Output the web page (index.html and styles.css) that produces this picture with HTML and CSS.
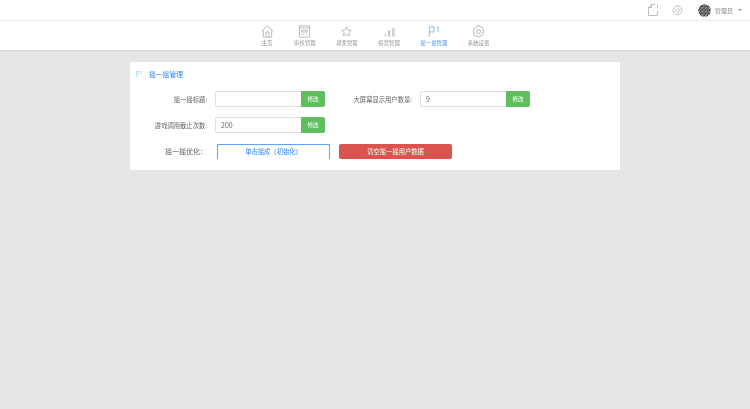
FILE: index.html
```html
<!DOCTYPE html>
<html lang="zh">
<head>
<meta charset="utf-8">
<title>摇一摇管理</title>
<link rel="stylesheet" href="styles.css">
</head>
<body>
<div class="page">
<header class="topbar">
  <svg class="top-icon doc" viewBox="0 0 10 12"><path d="M3.500.5H7.500M.5 3.500v8h9V7M3.500.5.500 3.500h3zM9.500 .5v3.500"/></svg>
  <svg class="top-icon gear" viewBox="0 0 14 14"><circle cx="7" cy="7" r="2.200"/><path d="M5.800.8h2.400l.4 1.800 1.700-.7 1.700 1.700-1 1.500 1.700.7v2.400l-1.700.5.900 1.600-1.700 1.700-1.600-.9-.5 1.700H5.800l-.5-1.700-1.600.9L2 10.300l.9-1.600-1.700-.5V5.800l1.700-.7-1-1.500 1.700-1.700 1.700.7z"/></svg>
  <svg class="avatar" viewBox="0 0 14 14"><defs><pattern id="noise" width="4" height="4" patternUnits="userSpaceOnUse"><rect width="4" height="4" fill="#2e2e2e"/><path d="M0 0h1.200v1.200H0zM2 1h1.500v1H2zM1 2.500h1v1.500H1zM3 3h1v1H3z" fill="#e0e0e0"/></pattern></defs><circle cx="7" cy="7" r="6.800" fill="url(#noise)"/></svg>
  <span class="username">管理员</span>
  <span class="caret"></span>
</header>
<nav class="nav">
  <a class="nav-item">
    <svg viewBox="0 0 14 14"><path d="M.8 6.500 7 1l6.200 5.500M2.500 5.500v7.500h9V5.500M5.500 13V7.500h3V13"/></svg>
    <span>主页</span>
  </a>
  <a class="nav-item">
    <svg viewBox="0 0 14 14"><path d="M1.500 1h11v12h-11zM1.500 3h11M4 5.500h6v2H4zM4 10h3M8.500 10H10"/></svg>
    <span>审核管理</span>
  </a>
  <a class="nav-item">
    <svg viewBox="0 0 14 14"><path d="m7 2 1.500 3.300 3.500.5-2.500 2.400.7 3.500L7 10l-3.200 1.700.7-3.500L2 5.800l3.500-.5z"/></svg>
    <span>摸奖管理</span>
  </a>
  <a class="nav-item">
    <svg viewBox="0 0 14 14"><path d="M2.500 12.500V9M6 12.500V6M7.300 12.500V6M10.500 12.500V3.500M11.800 12.500V3.500"/></svg>
    <span>投票管理</span>
  </a>
  <a class="nav-item active">
    <svg viewBox="0 0 14 14"><path d="M2.500 12.500V2H7.500V7.500H2.500M10.500 2h1.500V7.500"/></svg>
    <span>摇一摇管理</span>
  </a>
  <a class="nav-item">
    <svg viewBox="0 0 14 14"><circle cx="7" cy="7" r="2.200"/><path d="M5.800.8h2.400l.4 1.800 1.700-.7 1.700 1.700-1 1.500 1.700.7v2.400l-1.700.5.900 1.600-1.700 1.700-1.600-.9-.5 1.700H5.800l-.5-1.700-1.600.9L2 10.300l.9-1.600-1.700-.5V5.800l1.700-.7-1-1.500 1.700-1.700 1.700.7z"/></svg>
    <span>系统设置</span>
  </a>
</nav>
<main class="card">
  <h1 class="card-title">
    <svg viewBox="0 0 8 8"><path d="M.5 8V.5h3.500v3.500H.5M6 .5h1.500V4"/></svg>
    <span>摇一摇管理</span>
  </h1>
  <div class="form">
    <div class="field">
      <label class="label">摇一摇标题:</label>
      <div class="input-group"><input class="input" type="text" value=""><button class="btn-edit">修改</button></div>
    </div>
    <div class="field">
      <label class="label">大屏幕显示用户数量:</label>
      <div class="input-group"><input class="input" type="text" value="9"><button class="btn-edit">修改</button></div>
    </div>
    <div class="field">
      <label class="label">游戏调用截止次数:</label>
      <div class="input-group"><input class="input" type="text" value="200"><button class="btn-edit">修改</button></div>
    </div>
    <div class="field"></div>
    <div class="field actions">
      <label class="label label-wide">摇一摇优化：</label>
      <button class="btn-outline">单击摇成（初始化）</button>
      <button class="btn-danger">清空摇一摇用户数据</button>
    </div>
  </div>
</main>
</div>
</body>
</html>
```
FILE: styles.css
```css
* { box-sizing: border-box; }
html, body { margin: 0; height: 100%; }
body {
  background: #e6e6e6;
  font-family: "Noto Sans CJK SC", "Liberation Sans", sans-serif;
  color: #666;
  font-size: 6.300px;
  overflow: hidden;
}
.page { filter: blur(.25px); }
svg { fill: none; stroke: currentColor; stroke-width: .65; display: block; }

.topbar {
  height: 21px;
  background: #fff;
  border-bottom: 1px solid #ececec;
  display: flex;
  align-items: center;
  justify-content: flex-end;
  padding-right: 8px;
  color: #9c9c9c;
}
.top-icon.doc { width: 10px; height: 12px; margin-right: 14px; }
.top-icon.gear { width: 11px; height: 11px; margin-right: 15px; }
.avatar { width: 13px; height: 13px; stroke: none; margin-right: 4px; }
.username { font-size: 6px; color: #8a8a8a; margin-right: 5px; }
.caret {
  width: 0; height: 0;
  border-left: 2px solid transparent;
  border-right: 2px solid transparent;
  border-top: 2px solid #999;
}

.nav {
  height: 29px;
  background: #fff;
  display: flex;
  justify-content: center;
  gap: 20.500px;
  box-shadow: 0 1px 1px #dcdcdc;
}
.nav-item {
  display: flex;
  flex-direction: column;
  align-items: center;
  padding-top: 4px;
  color: #939393;
}
.nav-item svg { width: 13px; height: 13px; }
.nav-item span { font-size: 5.400px; line-height: 8px; margin-top: .5px; white-space: nowrap; }
.nav-item.active { color: #3f92f2; }

.card {
  width: 490.500px;
  height: 108px;
  margin: 12px 0 0 129.500px;
  background: #fff;
  padding: 6.500px 0 0 6.500px;
}
.card-title {
  margin: 0;
  display: flex;
  align-items: center;
  font-size: 6.800px;
  line-height: 10px;
  font-weight: 400;
  color: #2f86ee;
}
.card-title svg { width: 6px; height: 6px; margin-right: 7px; color: #7db5f5; }

.form {
  margin-top: 12.800px;
  display: grid;
  grid-template-columns: 205px 205px;
  row-gap: 10.600px;
}
.field { display: flex; align-items: center; height: 15.500px; }
.label {
  width: 71px;
  text-align: right;
  margin-right: 8px;
  white-space: nowrap;
  color: #626262;
}
.label-wide { font-size: 7px; }
.input-group { display: flex; width: 110px; height: 15.500px; }
.input {
  width: 86px;
  height: 100%;
  border: 1px solid #e0e0e0;
  border-right: 0;
  border-radius: 2px 0 0 2px;
  padding: 0 5px;
  font: inherit;
  font-size: 7px;
  color: #666;
  background: #fff;
  outline: 0;
}
.btn-edit {
  width: 24px;
  height: 100%;
  border: 0;
  border-radius: 0 2px 2px 0;
  background: #5fbf5f;
  color: #fff;
  font: inherit;
  font-size: 5.600px;
  padding: 0;
}
.actions { grid-column: 1 / -1; }
.btn-outline, .btn-danger { width: 113px; height: 15px; font: inherit; padding: 0; }
.btn-outline {
  margin-left: 2px;
  background: #fff;
  color: #2f86ee;
  border: 0;
  border-radius: 2px 2px 0 0;
  box-shadow: inset 0 1px 0 #5aa5f5, inset 1px 0 0 #5aa5f5, inset -1px 0 0 #5aa5f5;
}
.btn-danger {
  margin-left: 9px;
  background: #d9534f;
  color: #fff;
  border: 0;
  border-radius: 2px;
}
```
